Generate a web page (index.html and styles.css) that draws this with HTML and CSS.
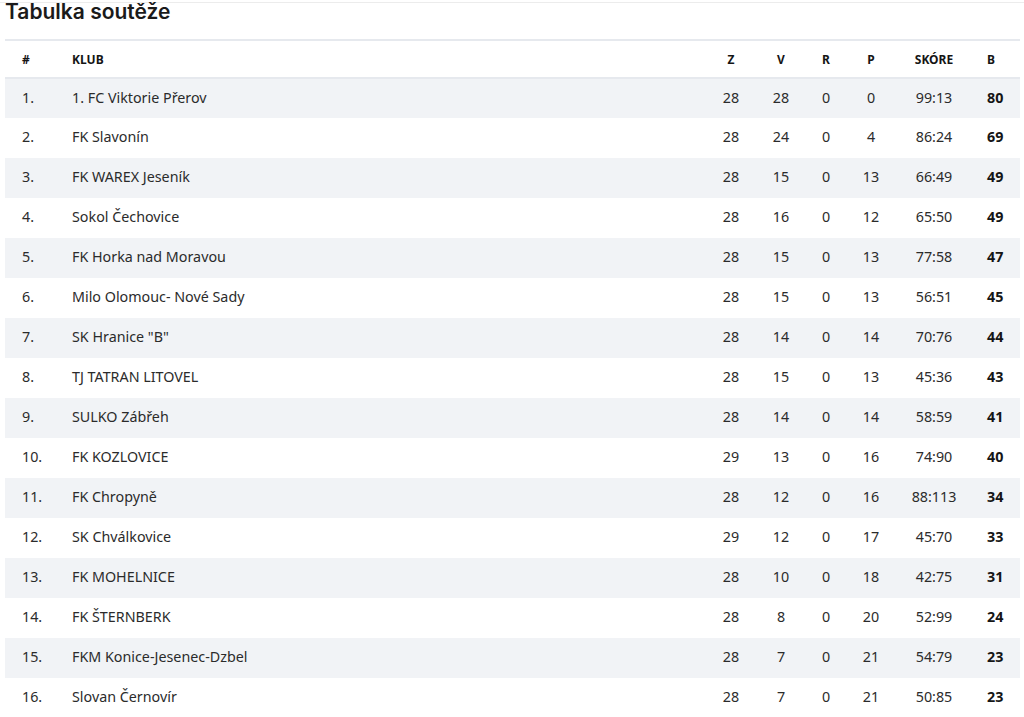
FILE: index.html
```html
<!DOCTYPE html>
<html lang="cs">
<head>
<meta charset="utf-8">
<title>Tabulka soutěže</title>
<link rel="stylesheet" href="styles.css">
</head>
<body>
<div class="topline"></div>
<h2 class="title">Tabulka soutěže</h2>
<table class="standings">
  <colgroup>
    <col class="c-pos"><col class="c-club"><col class="c-z"><col class="c-v"><col class="c-r"><col class="c-p"><col class="c-score"><col class="c-b">
  </colgroup>
  <thead>
    <tr><th class="pos">#</th><th class="club">KLUB</th><th>Z</th><th>V</th><th>R</th><th>P</th><th>SKÓRE</th><th class="pts">B</th></tr>
  </thead>
  <tbody>
    <tr><td class="pos">1.</td><td class="club">1. FC Viktorie Přerov</td><td>28</td><td>28</td><td>0</td><td>0</td><td>99:13</td><td class="pts">80</td></tr>
    <tr><td class="pos">2.</td><td class="club">FK Slavonín</td><td>28</td><td>24</td><td>0</td><td>4</td><td>86:24</td><td class="pts">69</td></tr>
    <tr><td class="pos">3.</td><td class="club">FK WAREX Jeseník</td><td>28</td><td>15</td><td>0</td><td>13</td><td>66:49</td><td class="pts">49</td></tr>
    <tr><td class="pos">4.</td><td class="club">Sokol Čechovice</td><td>28</td><td>16</td><td>0</td><td>12</td><td>65:50</td><td class="pts">49</td></tr>
    <tr><td class="pos">5.</td><td class="club">FK Horka nad Moravou</td><td>28</td><td>15</td><td>0</td><td>13</td><td>77:58</td><td class="pts">47</td></tr>
    <tr><td class="pos">6.</td><td class="club">Milo Olomouc- Nové Sady</td><td>28</td><td>15</td><td>0</td><td>13</td><td>56:51</td><td class="pts">45</td></tr>
    <tr><td class="pos">7.</td><td class="club">SK Hranice "B"</td><td>28</td><td>14</td><td>0</td><td>14</td><td>70:76</td><td class="pts">44</td></tr>
    <tr><td class="pos">8.</td><td class="club">TJ TATRAN LITOVEL</td><td>28</td><td>15</td><td>0</td><td>13</td><td>45:36</td><td class="pts">43</td></tr>
    <tr><td class="pos">9.</td><td class="club">SULKO Zábřeh</td><td>28</td><td>14</td><td>0</td><td>14</td><td>58:59</td><td class="pts">41</td></tr>
    <tr><td class="pos">10.</td><td class="club">FK KOZLOVICE</td><td>29</td><td>13</td><td>0</td><td>16</td><td>74:90</td><td class="pts">40</td></tr>
    <tr><td class="pos">11.</td><td class="club">FK Chropyně</td><td>28</td><td>12</td><td>0</td><td>16</td><td>88:113</td><td class="pts">34</td></tr>
    <tr><td class="pos">12.</td><td class="club">SK Chválkovice</td><td>29</td><td>12</td><td>0</td><td>17</td><td>45:70</td><td class="pts">33</td></tr>
    <tr><td class="pos">13.</td><td class="club">FK MOHELNICE</td><td>28</td><td>10</td><td>0</td><td>18</td><td>42:75</td><td class="pts">31</td></tr>
    <tr><td class="pos">14.</td><td class="club">FK ŠTERNBERK</td><td>28</td><td>8</td><td>0</td><td>20</td><td>52:99</td><td class="pts">24</td></tr>
    <tr><td class="pos">15.</td><td class="club">FKM Konice-Jesenec-Dzbel</td><td>28</td><td>7</td><td>0</td><td>21</td><td>54:79</td><td class="pts">23</td></tr>
    <tr><td class="pos">16.</td><td class="club">Slovan Černovír</td><td>28</td><td>7</td><td>0</td><td>21</td><td>50:85</td><td class="pts">23</td></tr>
  </tbody>
</table>
</body>
</html>
```
FILE: styles.css
```css
html, body {
  margin: 0;
  padding: 0;
  background: #fff;
}
body {
  padding: 0 4px 0 5px;
  font-family: "Noto Sans", "Liberation Sans", sans-serif;
  color: #2b2b2b;
  overflow: hidden;
}
.topline {
  height: 1px;
  margin: 2px -4px 0 -5px;
  background: #ececec;
}
.title {
  margin: 0;
  height: 36px;
  font-family: Inter, "Liberation Sans", sans-serif;
  font-weight: 600;
  font-size: 21px;
  line-height: 17px;
  letter-spacing: 0;
  color: #1a1a1a;
}
.standings {
  width: 1015px;
  border-collapse: collapse;
  table-layout: fixed;
  font-size: 14.3px;
}
.c-pos { width: 50px; }
.c-club { width: 651px; }
.c-z { width: 50px; }
.c-v { width: 50px; }
.c-r { width: 40px; }
.c-p { width: 50px; }
.c-score { width: 76px; }
.c-b { width: 48px; }
.standings thead tr {
  border-top: 2px solid #e6e9ee;
  border-bottom: 2px solid #e6e9ee;
}
.standings th {
  height: 36px;
  padding: 0;
  font-size: 12px;
  font-weight: 700;
  color: #151515;
  text-align: center;
}
.standings td {
  height: 40px;
  box-sizing: border-box;
  padding: 0 0 3px;
  text-align: center;
  white-space: nowrap;
}
.standings tbody tr:nth-child(odd) {
  background: #f1f3f6;
}
.standings .pos {
  text-align: left;
  padding-left: 17px;
}
.standings .club {
  text-align: left;
  padding-left: 17px;
}
.standings .pts {
  text-align: left;
  padding-left: 15px;
}
.standings td.pts {
  font-weight: 700;
  color: #151515;
}
```
